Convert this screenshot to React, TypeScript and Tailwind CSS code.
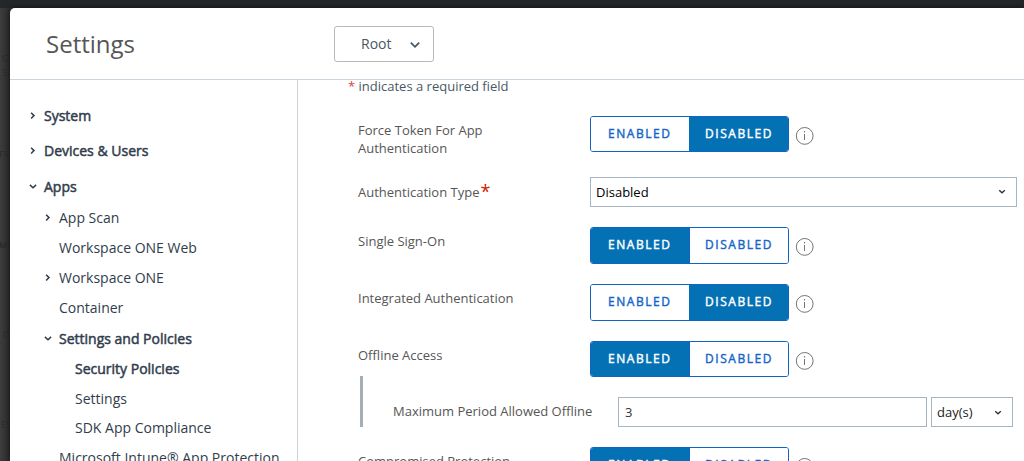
import React from "react";

function Chevron({ open = false, className = "" }: { open?: boolean; className?: string }) {
  return (
    <svg viewBox="0 0 8 8" className={`h-2 w-2 shrink-0 ${className}`} fill="none" stroke="currentColor" strokeWidth="1.5">
      <path d={open ? "M0.9 1.9 4 4.7 7.1 1.9" : "M2.1 0.7 5 3.6 2.1 6.5"} />
    </svg>
  );
}

function SelectArrow() {
  return (
    <svg viewBox="0 0 8 8" className="h-2 w-2 shrink-0 text-[#2c3443]" fill="none" stroke="currentColor" strokeWidth="1.4">
      <path d="M1.2 2.2 4 4.8 6.8 2.2" />
    </svg>
  );
}

type NavItem = {
  label: string;
  row: string;
  strong?: boolean;
  arrow?: "open" | "closed";
};

const nav: NavItem[] = [
  { label: "System", row: "h-[30px] pl-[18px]", strong: true, arrow: "closed" },
  { label: "Devices & Users", row: "mt-[5px] h-[30px] pl-[18px]", strong: true, arrow: "closed" },
  { label: "Apps", row: "mt-[6px] h-[30px] pl-[18px]", strong: true, arrow: "open" },
  { label: "App Scan", row: "mt-px h-[30px] pl-[33px]", arrow: "closed" },
  { label: "Workspace ONE Web", row: "h-[30px] pl-[33px]" },
  { label: "Workspace ONE", row: "h-[30px] pl-[33px]", arrow: "closed" },
  { label: "Container", row: "h-[30px] pl-[33px]" },
  { label: "Settings and Policies", row: "mt-px h-[30px] pl-[33px]", strong: true, arrow: "open" },
  { label: "Security Policies", row: "h-[30px] pl-[49px]", strong: true },
  { label: "Settings", row: "h-[30px] pl-[49px]" },
  { label: "SDK App Compliance", row: "h-[28px] pl-[49px]" },
  { label: "Microsoft Intune® App Protection", row: "mt-px h-[30px] pl-[33px]" },
];

function NavRow({ item }: { item: NavItem }) {
  return (
    <li className={`flex shrink-0 items-center text-[14px] leading-5 whitespace-nowrap text-[#313d4c] ${item.row}`}>
      <span className="flex w-4 shrink-0">{item.arrow && <Chevron open={item.arrow === "open"} className="ml-px" />}</span>
      <span className={item.strong ? "[-webkit-text-stroke:0.5px_#313d4c]" : ""}>{item.label}</span>
    </li>
  );
}

function Toggle({ value, size }: { value: boolean; size: string }) {
  const on = "bg-[#0571b5] text-white [-webkit-text-stroke:0.4px_#ffffff]";
  const off = "bg-white text-[#1565c8] [-webkit-text-stroke:0.4px_#1565c8]";
  const base = "flex items-center pb-px text-[12px] tracking-[1.55px]";
  return (
    <div className={`flex w-[199px] shrink-0 overflow-hidden rounded-[3px] border border-[#1264c4] ${size}`}>
      <button className={`${base} w-[98px] pl-[17px] ${value ? on : off}`}>ENABLED</button>
      <button className={`${base} flex-1 border-l pl-[15px] ${value ? "border-[#1264c4]" : "border-[#0571b5]"} ${value ? off : on}`}>DISABLED</button>
    </div>
  );
}

function Info() {
  return (
    <svg viewBox="0 0 19 19" className="mt-[10px] ml-[6px] h-[19px] w-[19px] shrink-0" fill="none" stroke="#747474">
      <circle cx="9.7" cy="9.9" r="8.4" strokeWidth="1" />
      <path d="M9.5 8v6" strokeWidth="1" />
      <path d="M9.5 5v1.5" strokeWidth="1.1" />
    </svg>
  );
}

function Field({ label, row, size, value }: { label: React.ReactNode; row: string; size: string; value: boolean }) {
  return (
    <div className={`flex shrink-0 items-start ${row}`}>
      <div className="w-[232px] shrink-0 pt-[5px] text-[13px] leading-[18px] text-[#565656]">{label}</div>
      <Toggle value={value} size={size} />
      <Info />
    </div>
  );
}

export default function App() {
  return (
    <div className="relative h-[461px] w-[1024px] overflow-hidden bg-[#3b3b3b] font-['Open_Sans',sans-serif]">
      <div className="h-2 bg-[#242729]" />
      <div className="absolute top-2 left-0 h-[453px] w-[10px] overflow-hidden bg-linear-to-r from-[#3d3d3d] to-[#2d2d2d] text-[9px] leading-[14px] text-[#2b2b2b]">
        <div className="mt-[44px] ml-[2px]">G</div>
        <div className="ml-[2px]">ST</div>
        <div className="mt-[68px] -ml-[1px]">FR</div>
        <div className="mt-[76px] -ml-[1px] font-bold">MO</div>
        <div className="mt-[76px] ml-[3px]">D</div>
        <div className="mt-[76px] ml-px">ES</div>
      </div>
      <div className="relative ml-[10px] flex h-[453px] flex-col overflow-hidden rounded-tl-[5px] bg-white shadow-[0_0_6px_rgba(0,0,0,0.6)]">
        <header className="flex h-[72px] shrink-0 items-center border-b border-[#cbd4dc]">
          <h1 className="w-[288px] pl-9 text-[24px] leading-8 text-[#565656]">Settings</h1>
          <button className="ml-9 flex h-9 w-[100px] items-center rounded-[3px] border border-[#b9b9b9] pl-[26px] text-[14px] text-[#495865]">
            <span>Root</span>
            <svg viewBox="0 0 10 8" className="mt-[2px] ml-[19px] h-2 w-[10px]" fill="none" stroke="currentColor" strokeWidth="1.8">
              <path d="M0.8 1.6 5 5.8 9.2 1.6" />
            </svg>
          </button>
        </header>
        <div className="flex min-h-0 flex-1">
          <nav className="w-[288px] shrink-0 overflow-hidden border-r border-[#cbd4dc] pt-[21px]">
            <ul className="flex flex-col">
              {nav.map((item, i) => (
                <NavRow key={i} item={item} />
              ))}
            </ul>
          </nav>
          <main className="flex min-w-0 flex-1 flex-col overflow-hidden pl-[60px]">
            <p className="-ml-[10px] h-[36px] shrink-0 text-[13px] leading-[12px] text-[#495865]">
              <span className="text-[#e04040]">*</span> indicates a required field
            </p>
            <Field label={<>Force Token For App<br />Authentication</>} row="h-[61px]" size="h-9" value={false} />
            <div className="flex h-[50px] shrink-0 items-start">
              <div className="flex w-[232px] shrink-0 pt-[6px] text-[13px] leading-[18px] text-[#565656]">
                <span>Authentication Type</span>
                <span className="ml-px text-[18px] leading-[17px] text-[#c92100]">*</span>
              </div>
              <div className="flex h-[30px] w-[427px] items-center justify-between border border-[#a5b5c2] pr-[10px] pl-[5px] text-[13px] text-black">
                <span className="mt-px">Disabled</span>
                <SelectArrow />
              </div>
            </div>
            <Field label="Single Sign-On" row="h-[57px]" size="h-[37px]" value={true} />
            <Field label="Integrated Authentication" row="h-[57px]" size="h-[37px]" value={false} />
            <Field label="Offline Access" row="h-[35px]" size="h-9" value={true} />
            <div className="ml-[2px] flex h-[51px] shrink-0 items-end border-l-[3px] border-[#a5afb8] pl-[30px]">
              <div className="w-[225px] pb-[7px] text-[13px] leading-[18px] text-[#565656]">Maximum Period Allowed Offline</div>
              <div className="flex h-[30px] w-[309px] items-center border border-[#a5b5c2] pt-px pl-[6px] text-[13px] text-[#333]">3</div>
              <div className="ml-1 flex h-[30px] w-[82px] items-center justify-between border border-[#a5b5c2] pt-px pr-[10px] pl-[5px] text-[13px] text-[#222]">
                <span>day(s)</span>
                <SelectArrow />
              </div>
            </div>
            <Field label="Compromised Protection" row="mt-5 h-[57px]" size="h-9" value={true} />
          </main>
        </div>
      </div>
    </div>
  );
}
